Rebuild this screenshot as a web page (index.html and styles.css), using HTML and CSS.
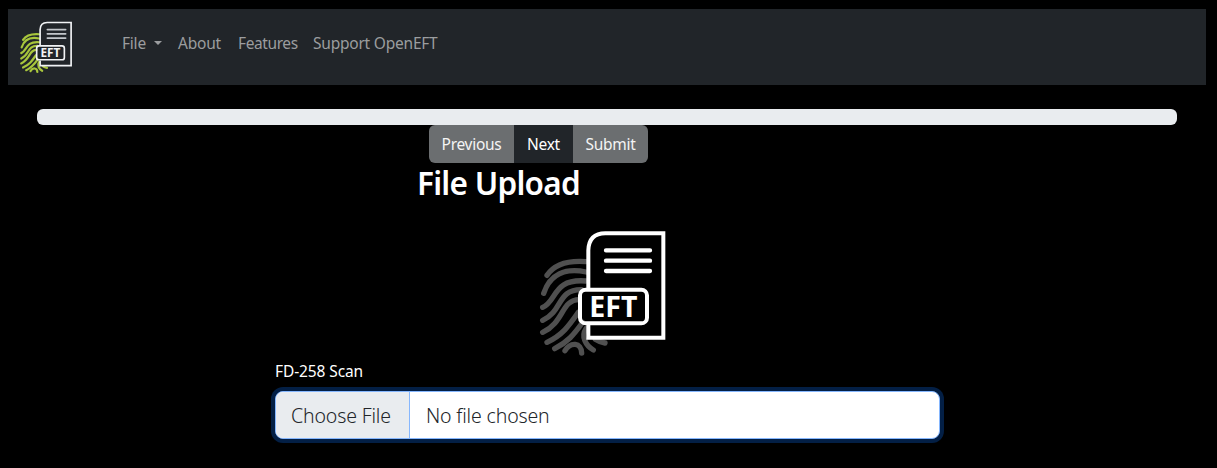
FILE: index.html
```html
<!DOCTYPE html>
<html lang="en">
<head>
<meta charset="utf-8">
<title>OpenEFT</title>
<link rel="stylesheet" href="styles.css">
</head>
<body>
<svg class="defs" width="0" height="0">
  <symbol id="logo" viewBox="0 0 450 405">
    <g class="ridges">
      <path d="M51 151C75 115 115 106 168 110"/>
      <path d="M41 205C60 148 105 128 168 141"/>
      <path d="M38 247C82 228 67 160 168 168"/>
      <path d="M38 286C100 258 80 193 155 194"/>
      <path d="M38 322C105 290 92 225 148 224"/>
      <path d="M51 352C98 330 117 302 145 262"/>
      <path d="M74 371C112 352 132 329 158 292"/>
      <path d="M105 377C122 350 154 352 155 384"/>
      <path d="M168 311C152 335 168 363 190 375"/>
      <path d="M196 343Q208 351 225 354"/>
    </g>
    <path class="sheet" d="M175 190V76Q177 25 226 25H400V338H175V300"/>
    <path class="lines" d="M228 76H360M228 107H360M228 138H360"/>
    <rect class="tag" x="150" y="194" width="201" height="101" rx="17"/>
    <text class="tag-text" x="178" y="275" textLength="144" lengthAdjust="spacingAndGlyphs">EFT</text>
  </symbol>
</svg>
<nav class="navbar">
  <a class="brand"><svg class="brand-logo"><use href="#logo"/></svg></a>
  <a class="nav-link file">File <span class="caret"></span></a>
  <a class="nav-link about">About</a>
  <a class="nav-link features">Features</a>
  <a class="nav-link support">Support OpenEFT</a>
</nav>
<main class="content">
  <div class="progress"></div>
  <div class="button-group">
    <button class="btn previous" disabled>Previous</button>
    <button class="btn next">Next</button>
    <button class="btn submit" disabled>Submit</button>
  </div>
  <h2 class="title">File Upload</h2>
  <svg class="hero-logo"><use href="#logo"/></svg>
  <div class="upload">
    <label class="label">FD-258 Scan</label>
    <div class="file-input">
      <span class="choose">Choose File</span>
      <span class="chosen">No file chosen</span>
    </div>
  </div>
</main>
</body>
</html>
```
FILE: styles.css
```css
* { box-sizing: border-box; }
body {
  margin: 0;
  padding: 9px 11px 0 8px;
  height: 468px;
  overflow: hidden;
  background: #000;
  color: #fff;
  font: 15.5px/24px "Noto Sans", "Open Sans", sans-serif;
  letter-spacing: -0.22px;
}
.defs { position: absolute; }
.navbar {
  display: flex;
  height: 76px;
  padding: 10px 0 0 8px;
  background: #212529;
}
.brand { width: 106px; --ridge: #a8c63c; --line: #f1f3f5; --rule: #c3c7cb; }
.brand-logo { display: block; width: 62px; height: 56px; }
.nav-link { padding-top: 12px; color: #9b9d9f; white-space: nowrap; }
.file { width: 56px; }
.about { width: 60px; }
.features { width: 75px; letter-spacing: -0.4px; }
.caret {
  display: inline-block;
  margin-left: 4px;
  vertical-align: 4px;
  border: 4px solid transparent;
  border-top-color: #9b9d9f;
  border-bottom: 0;
}
.content { padding: 24px 29px 0; }
.progress { height: 16px; border-radius: 6px; background: #e9ecef; }
.button-group {
  display: flex;
  width: 219px;
  height: 38px;
  margin-left: 392px;
  overflow: hidden;
  border-radius: 6px;
}
.btn {
  padding: 0;
  border: 0;
  background: #6b6e70;
  color: #f4f4f4;
  font: inherit;
  letter-spacing: -0.3px;
  white-space: nowrap;
}
.previous { width: 85px; }
.next { width: 59px; background: #212529; color: #fff; }
.submit { width: 75px; }
.title {
  margin: 1px 0 0 380px;
  font-size: 31.5px;
  font-weight: 600;
  line-height: 38px;
  letter-spacing: -0.75px;
}
.hero-logo {
  display: block;
  width: 150px;
  height: 135px;
  margin: 23px 0 0 493px;
  --ridge: #505050;
  --line: #fff;
  --rule: #fff;
}
.upload { width: 665px; margin-left: 238px; }
.label { display: block; height: 32px; margin-top: -1px; letter-spacing: -0.1px; }
.file-input {
  display: flex;
  height: 48px;
  overflow: hidden;
  border: 1px solid #86b7fe;
  border-radius: 8px;
  background: #fff;
  box-shadow: 0 0 0 4px #031f45;
  color: #212529;
  font-size: 19.5px;
  font-weight: 350;
  letter-spacing: -0.15px;
  line-height: 48px;
}
.choose {
  width: 134px;
  padding-left: 15px;
  border-right: 1px solid #86b7fe;
  background: #e9ecef;
}
.chosen { padding-left: 16px; }
.ridges { fill: none; stroke: var(--ridge); stroke-width: 16; stroke-linecap: round; }
.sheet { fill: none; stroke: var(--line); stroke-width: 12; }
.lines { fill: none; stroke: var(--rule); stroke-width: 13; stroke-linecap: round; }
.tag { fill: none; stroke: var(--line); stroke-width: 12; }
.tag-text { fill: var(--line); font: 700 84px "Noto Sans", sans-serif; letter-spacing: 0; }
```
